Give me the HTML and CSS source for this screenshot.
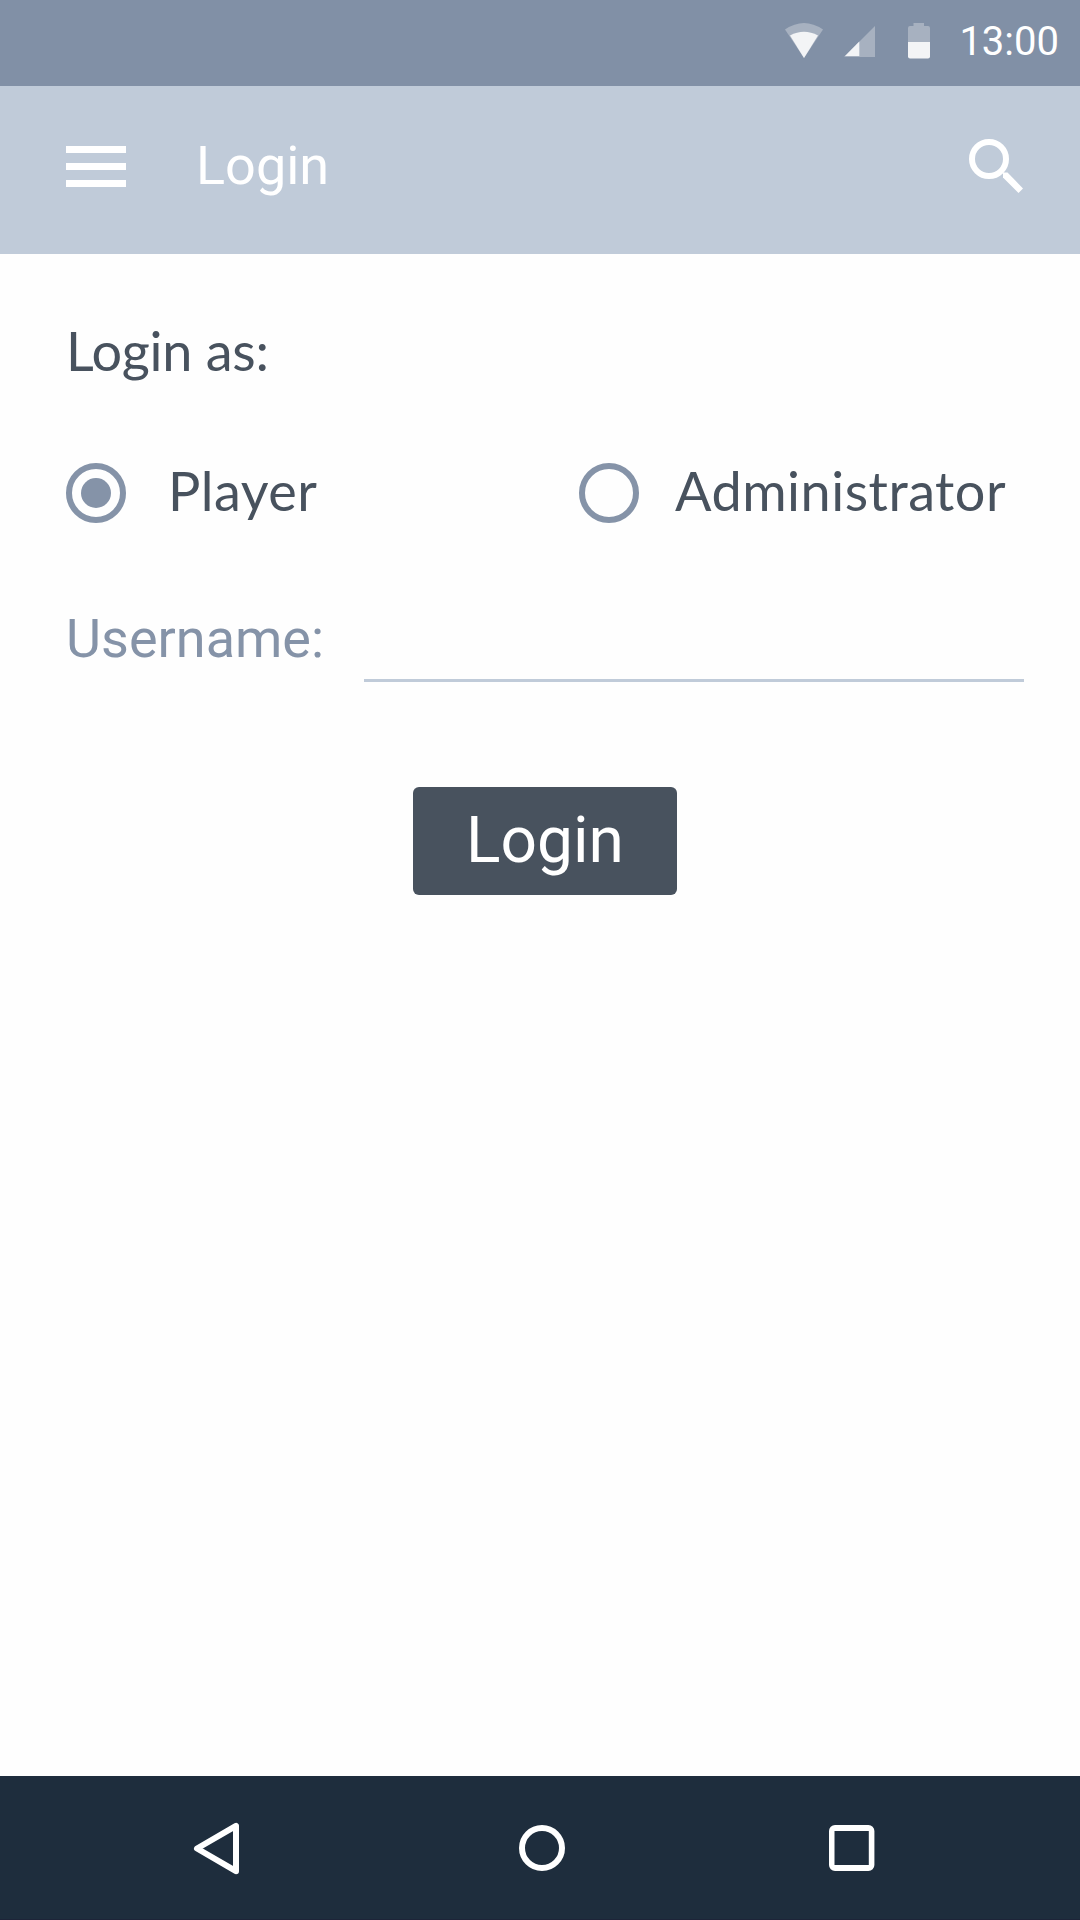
FILE: index.html
```html
<!DOCTYPE html>
<html lang="en">
<head>
<meta charset="utf-8">
<title>Login</title>
<link rel="stylesheet" href="styles.css">
</head>
<body>
<div class="screen">
  <div class="status-bar">
    <svg class="status-icons" width="146" height="38" viewBox="785 22 146 38">
      <path class="faint" d="M785 29.500Q804 16.500 823 29.500L804 58Z"/>
      <path class="solid" d="M790 35.500Q804 28 818 35.500L804 58Z"/>
      <path class="faint" d="M875 26V57H844Z"/>
      <path class="solid" d="M859.300 41.500V56H845Z"/>
      <path class="faint" d="M913.500 23h10.500v3h4a2 2 0 0 1 2 2v14h-22V28a2 2 0 0 1 2-2h3.500z"/>
      <path class="solid" d="M908 42h22v14.500a2 2 0 0 1-2 2h-18a2 2 0 0 1-2-2z"/>
    </svg>
    <span class="clock">13:00</span>
  </div>

  <header class="app-bar">
    <svg class="menu" width="60" height="41" viewBox="0 0 60 41">
      <path d="M0 0h60v7H0zM0 17h60v7H0zM0 34h60v7H0z"/>
    </svg>
    <h1 class="title">Login</h1>
    <svg class="search" width="56" height="56" viewBox="968 138 56 56">
      <circle cx="989" cy="159" r="17"/>
      <path d="M1003 172.500h4.500l15.500 16-4.500 4.500-15.500-15.500z"/>
    </svg>
  </header>

  <main class="content">
    <p class="prompt">Login as:</p>
    <div class="roles">
      <div class="role player"><span class="radio checked"></span><span class="role-name">Player</span></div>
      <div class="role admin"><span class="radio"></span><span class="role-name">Administrator</span></div>
    </div>
    <div class="field">
      <label class="field-label" for="username">Username:</label>
      <input class="field-input" id="username" type="text">
    </div>
    <button class="submit" type="button">Login</button>
  </main>

  <nav class="nav-bar">
    <svg width="50" height="56" viewBox="192 1820 50 56"><path d="M197 1848.500L236 1825.800V1871.200Z"/></svg>
    <svg class="home" width="46" height="46" viewBox="0 0 46 46"><circle cx="23" cy="23" r="20"/></svg>
    <svg width="46" height="46" viewBox="0 0 46 46"><path class="recents" fill-rule="evenodd" d="M6 0h33.400a6 6 0 0 1 6 6v34a6 6 0 0 1-6 6H6a6 6 0 0 1-6-6V6a6 6 0 0 1 6-6zM5.500 6v34h34.300V6z"/></svg>
  </nav>
</div>
</body>
</html>
```

FILE: styles.css
```css
* {
  box-sizing: border-box;
}

body {
  margin: 0;
  font-family: Roboto, "Liberation Sans", sans-serif;
}

svg {
  display: block;
  flex: none;
}

.screen {
  display: flex;
  flex-direction: column;
  width: 1080px;
  height: 1920px;
  background: #fefefe;
}

.status-bar {
  display: flex;
  justify-content: flex-end;
  align-items: center;
  height: 86px;
  padding: 0 21px 4px 0;
  background: #8190a6;
}

.status-icons {
  margin-right: 28px;
}

.clock {
  margin-top: 2px;
  font-size: 40px;
  line-height: 48px;
  color: #fff;
}

.faint {
  fill: #a7b1c0;
}

.solid {
  fill: #f3f4f6;
}

.app-bar {
  display: flex;
  align-items: center;
  height: 168px;
  padding: 0 56px 7px 66px;
  background: #c0cbd9;
}

.menu {
  fill: #fff;
}

.title {
  flex: 1;
  margin: 0 0 2px 70px;
  font-size: 54px;
  font-weight: 400;
  line-height: 64px;
  color: #fff;
}

.search {
  margin-bottom: 1px;
  fill: #fff;
}

.search circle {
  fill: none;
  stroke: #fff;
  stroke-width: 6;
}

.content {
  display: flex;
  flex: 1;
  flex-direction: column;
  padding: 65px 56px 0 66px;
  color: #48525e;
}

.prompt {
  margin: 0 0 77px;
  font: 54px/64px Lato, sans-serif;
  letter-spacing: -0.25px;
}

.roles {
  display: flex;
  height: 66px;
}

.role {
  display: flex;
  align-items: center;
}

.player {
  width: 513px;
}

.radio {
  display: grid;
  place-items: center;
  width: 60px;
  height: 60px;
  border: 6px solid #8593a8;
  border-radius: 50%;
}

.checked::before {
  content: "";
  width: 30px;
  height: 30px;
  border-radius: 50%;
  background: #8593a8;
}

.role-name {
  margin: 0 0 4px 42px;
  font: 54px/60px Lato, sans-serif;
  letter-spacing: 0.5px;
}

.admin .role-name {
  margin-left: 36px;
}

.field {
  display: flex;
  justify-content: space-between;
  height: 76px;
  margin-top: 80px;
}

.field-label {
  font-size: 54px;
  line-height: 66px;
  color: #8593a8;
}

.field-input {
  width: 660px;
  height: 76px;
  padding: 0 8px;
  border: 0;
  border-bottom: 3px solid #c0cbd9;
  outline: 0;
  background: none;
  font: inherit;
  font-size: 54px;
  color: #48525e;
}

.submit {
  width: 264px;
  height: 108px;
  margin: 105px 0 0 347px;
  padding: 0;
  border: 0;
  border-radius: 6px;
  background: #48525e;
  font: 64px/76px Roboto, sans-serif;
  color: #fff;
}

.nav-bar {
  display: flex;
  align-items: center;
  justify-content: space-between;
  height: 144px;
  padding: 0 205px 0 192px;
  border-bottom: 1px solid #1d2438;
  background: #1e2d3d;
}

.nav-bar path,
.nav-bar circle {
  fill: none;
  stroke: #fff;
  stroke-width: 6;
  stroke-linejoin: round;
}

.nav-bar .recents {
  fill: #fff;
  stroke: none;
}

.home {
  margin-left: 12px;
}
```
